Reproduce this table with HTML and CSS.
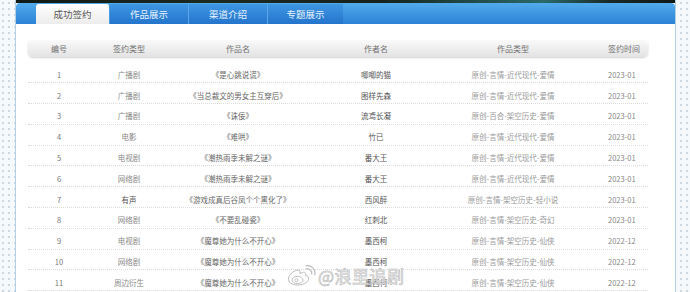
FILE: index.html
```html
<!DOCTYPE html>
<html lang="zh-CN">
<head>
<meta charset="utf-8">
<title>成功签约</title>
<link rel="stylesheet" href="styles.css">
</head>
<body>
<div class="page">
  <div class="banner"></div>
  <div class="tabbar">
    <div class="tab active">成功签约</div>
    <div class="tab">作品展示</div>
    <div class="tab">渠道介绍</div>
    <div class="tab">专题展示</div>
  </div>
  <div class="content">
    <div class="thead">
      <div>编号</div><div>签约类型</div><div>作品名</div><div>作者名</div><div>作品类型</div><div class="date"><span>签约时间</span></div>
    </div>
    <div class="row"><div class="no">1</div><div class="kind">广播剧</div><div class="work">《是心跳说谎》</div><div class="author">唧唧的猫</div><div class="genre">原创-言情-近代现代-爱情</div><div class="date"><span>2023-01</span></div></div>
    <div class="row"><div class="no">2</div><div class="kind">广播剧</div><div class="work">《当总裁文的男女主互穿后》</div><div class="author">图样先森</div><div class="genre">原创-言情-近代现代-爱情</div><div class="date"><span>2023-01</span></div></div>
    <div class="row"><div class="no">3</div><div class="kind">广播剧</div><div class="work">《诛佞》</div><div class="author">流鸢长凝</div><div class="genre">原创-百合-架空历史-爱情</div><div class="date"><span>2023-01</span></div></div>
    <div class="row"><div class="no">4</div><div class="kind">电影</div><div class="work">《难哄》</div><div class="author">竹已</div><div class="genre">原创-言情-近代现代-爱情</div><div class="date"><span>2023-01</span></div></div>
    <div class="row"><div class="no">5</div><div class="kind">电视剧</div><div class="work">《潮热雨季未解之谜》</div><div class="author">番大王</div><div class="genre">原创-言情-近代现代-爱情</div><div class="date"><span>2023-01</span></div></div>
    <div class="row"><div class="no">6</div><div class="kind">网络剧</div><div class="work">《潮热雨季未解之谜》</div><div class="author">番大王</div><div class="genre">原创-言情-近代现代-爱情</div><div class="date"><span>2023-01</span></div></div>
    <div class="row"><div class="no">7</div><div class="kind dark">有声</div><div class="work">《游戏成真后谷凤个个黑化了》</div><div class="author">西风醉</div><div class="genre">原创-言情-架空历史-轻小说</div><div class="date"><span>2023-01</span></div></div>
    <div class="row"><div class="no">8</div><div class="kind">网络剧</div><div class="work">《不要乱碰瓷》</div><div class="author">红刺北</div><div class="genre">原创-言情-架空历史-奇幻</div><div class="date"><span>2023-01</span></div></div>
    <div class="row"><div class="no">9</div><div class="kind">电视剧</div><div class="work">《魔尊她为什么不开心》</div><div class="author">墨西柯</div><div class="genre">原创-言情-架空历史-仙侠</div><div class="date"><span>2022-12</span></div></div>
    <div class="row"><div class="no">10</div><div class="kind">网络剧</div><div class="work">《魔尊她为什么不开心》</div><div class="author">墨西柯</div><div class="genre">原创-言情-架空历史-仙侠</div><div class="date"><span>2022-12</span></div></div>
    <div class="row"><div class="no">11</div><div class="kind">周边衍生</div><div class="work">《魔尊她为什么不开心》</div><div class="author">墨西柯</div><div class="genre">原创-言情-架空历史-仙侠</div><div class="date"><span>2022-12</span></div></div>
  </div>
  <div class="watermark">
    <svg class="wb" width="30" height="24" viewBox="0 0 30 24">
      <path d="M12 6 C6 7 2 12 2.5 15.5 C3 19.5 8 21.5 13 21 C19 20.5 23 17.5 22.5 14 C22.2 12 20.5 11.5 19.5 11.8 C20.3 9.5 19.5 8 17.5 8.3 C16 8.5 14.5 9.3 14 9.6 C14.5 7 13.8 5.8 12 6 Z" fill="rgba(255,255,255,0.85)" stroke="#bdbdbd" stroke-width="1"/>
      <ellipse cx="11.5" cy="16" rx="5.5" ry="3.6" fill="none" stroke="#bdbdbd" stroke-width="1"/>
      <circle cx="10.5" cy="16.3" r="1.6" fill="none" stroke="#bdbdbd" stroke-width="0.9"/>
      <path d="M20 5 C23 4.5 26 6.5 25.8 10" fill="none" stroke="#bdbdbd" stroke-width="1.2" stroke-linecap="round"/>
      <path d="M20.3 1.8 C25.5 1 30 5 28.8 10.8" fill="none" stroke="#bdbdbd" stroke-width="1.2" stroke-linecap="round"/>
    </svg>
    <span class="wm-text">@浪里追剧</span>
  </div>
</div>
</body>
</html>
```
FILE: styles.css
```css
html, body {
  margin: 0;
  padding: 0;
}
body {
  width: 690px;
  height: 292px;
  overflow: hidden;
  background-color: #f6f9fb;
  background-image: radial-gradient(circle, #cdd8e0 0.9px, transparent 1.2px);
  background-size: 6px 6px;
  font-family: "Noto Sans CJK SC", "Noto Sans", sans-serif;
}
.page {
  position: relative;
  margin-left: 15px;
  width: 659px;
  height: 292px;
  background: #fff;
  border-left: 1px solid #b3cfe5;
  border-right: 1px solid #b3cfe5;
}
.banner {
  height: 3px;
  background: linear-gradient(90deg, #0f1a14 0%, #1d2a20 30%, #16211b 55%, #2a6a6a 80%, #1a2a28 90%, #101816 100%);
}
.tabbar {
  height: 21px;
  display: flex;
  align-items: flex-end;
  padding-left: 20px;
  border-radius: 4px 4px 0 0;
  background: linear-gradient(#52abec, #2b82d6);
}
.tab {
  width: 78px;
  height: 20px;
  display: flex;
  align-items: center;
  justify-content: center;
  font-size: 9.5px;
  color: #eaf4fd;
  background: linear-gradient(#3f97e3, #2474cc);
  border-right: 1px solid #5aa7e8;
}
.tab.active {
  width: 73px;
  color: #555;
  border-radius: 3px 3px 0 0;
  background: linear-gradient(#ffffff, #ececec);
  border-right: 1px solid #4a9be2;
}
.tab:last-child {
  width: 75px;
  border-right: none;
}
.content {
  padding: 15px 0 0 12px;
  width: 620px;
}
.thead {
  display: grid;
  grid-template-columns: 62px 78px 140px 136px 138px 66px;
  height: 18px;
  align-items: center;
  border-radius: 5px;
  background: linear-gradient(#fbfbfb, #e3e3e3);
  box-shadow: 0 1px 2px rgba(0,0,0,0.18), inset 0 1px 0 #fff;
  font-size: 8px;
  color: #707070;
  text-align: center;
  margin-bottom: 5.5px;
}
.row {
  display: grid;
  grid-template-columns: 62px 78px 140px 136px 138px 66px;
  height: 20.8px;
  padding-top: 4px;
  box-sizing: border-box;
  align-items: center;
  border-bottom: 1px dotted #dcdcdc;
  font-size: 7.5px;
  text-align: center;
  white-space: nowrap;
}
.no { color: #777; }
.kind { color: #8a8a8a; }
.kind.dark { color: #555; }
.work { color: #666; }
.author { color: #555; }
.genre { color: #9a9a9a; }
.date {
  text-align: left;
  padding-left: 26px;
}
.date span {
  display: block;
  width: 32px;
  overflow: hidden;
  color: #888;
}
.thead .date span { color: #707070; }
.watermark {
  position: absolute;
  left: 270px;
  top: 263px;
  display: flex;
  align-items: center;
  gap: 2px;
}
.wm-text {
  font-size: 17px;
  color: rgba(255,255,255,0.9);
  -webkit-text-stroke: 0.7px #bdbdbd;
  letter-spacing: 0.5px;
}
```
